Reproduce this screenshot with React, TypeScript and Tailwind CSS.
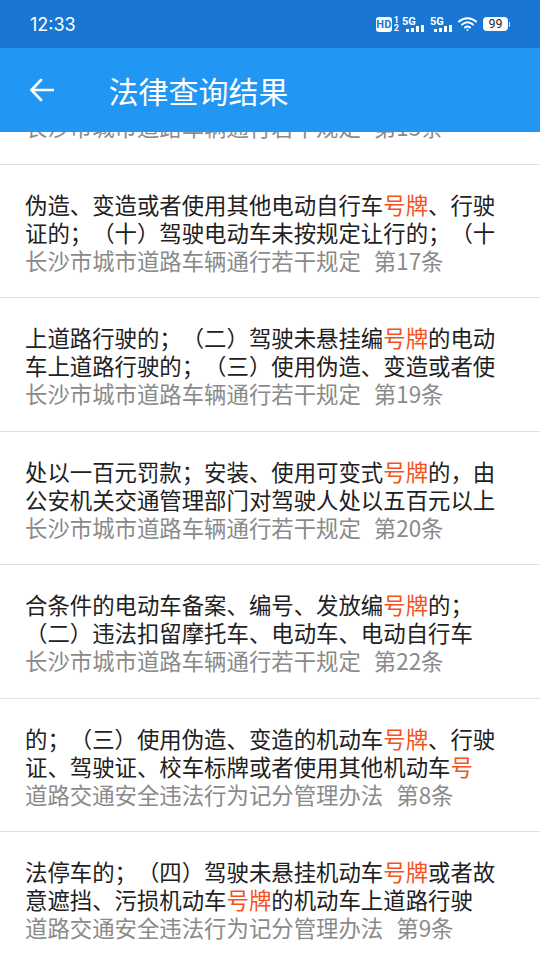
import React from "react";

const FONT = '"Noto Sans CJK SC", "Noto Sans", sans-serif';

function Hl({ text }: { text: string }) {
  const parts = text.split(/(号牌|号$)/);
  return (
    <>
      {parts.map((p, i) =>
        p === "号牌" || p === "号" ? (
          <span key={i} className="text-[#f4511e]">{p}</span>
        ) : (
          <span key={i}>{p}</span>
        )
      )}
    </>
  );
}

const rows = [
  { a: "", b: "", c: "长沙市城市道路车辆通行若干规定", d: "第15条" },
  { a: "伪造、变造或者使用其他电动自行车号牌、行驶", b: "证的；（十）驾驶电动车未按规定让行的；（十", c: "长沙市城市道路车辆通行若干规定", d: "第17条" },
  { a: "上道路行驶的；（二）驾驶未悬挂编号牌的电动", b: "车上道路行驶的；（三）使用伪造、变造或者使", c: "长沙市城市道路车辆通行若干规定", d: "第19条" },
  { a: "处以一百元罚款；安装、使用可变式号牌的，由", b: "公安机关交通管理部门对驾驶人处以五百元以上", c: "长沙市城市道路车辆通行若干规定", d: "第20条" },
  { a: "合条件的电动车备案、编号、发放编号牌的；", b: "（二）违法扣留摩托车、电动车、电动自行车", c: "长沙市城市道路车辆通行若干规定", d: "第22条" },
  { a: "的；（三）使用伪造、变造的机动车号牌、行驶", b: "证、驾驶证、校车标牌或者使用其他机动车号", c: "道路交通安全违法行为记分管理办法", d: "第8条" },
  { a: "法停车的；（四）驾驶未悬挂机动车号牌或者故", b: "意遮挡、污损机动车号牌的机动车上道路行驶", c: "道路交通安全违法行为记分管理办法", d: "第9条" },
];

function Signal({ label }: { label: string }) {
  return (
    <div className="flex flex-col items-start w-[23px] h-[15px]">
      <span className="text-[11px] leading-[9px] font-bold text-white" style={{ fontFamily: "Roboto, sans-serif" }}>{label}</span>
      <div className="flex items-end gap-[2px] -mt-[1px] ml-[4px] h-[7px]">
        <div className="w-[3px] h-[3px] bg-white" />
        <div className="w-[3px] h-[4px] bg-white" />
        <div className="w-[3px] h-[6px] bg-white" />
        <div className="w-[3px] h-[7px] bg-white" />
      </div>
    </div>
  );
}

export default function App() {
  return (
    <div className="w-[540px] h-[960px] overflow-hidden bg-white flex flex-col [text-spacing-trim:space-all]" style={{ fontFamily: FONT }}>
      <div className="h-[48px] bg-[#1976d2] flex items-center justify-between pl-[30px] pr-[30px] shrink-0">
        <span className="text-[18px] text-white" style={{ fontFamily: "Inter, sans-serif" }}>12:33</span>
        <div className="flex items-center">
          <div className="flex items-center gap-[2px] mr-[3px]">
            <span className="bg-white text-[#1976d2] rounded-[3px] text-[11px] leading-[15px] h-[15px] w-[16px] text-center font-bold" style={{ fontFamily: "Roboto, sans-serif" }}>HD</span>
            <div className="flex flex-col text-white text-[9px] leading-[8px] font-bold" style={{ fontFamily: "Roboto, sans-serif" }}>
              <span>1</span>
              <span>2</span>
            </div>
          </div>
          <Signal label="5G" />
          <div className="w-[5px]" />
          <Signal label="5G" />
          <svg className="ml-[5px]" width="20" height="16" viewBox="0 0 20 16" fill="none" stroke="white" strokeWidth="2" strokeLinecap="round">
            <path d="M1 5.5C6 1 13 1 18 5.5" />
            <path d="M4 8.6C7.5 5.6 11.5 5.6 15 8.6" />
            <path d="M7 11.5C8.6 10.2 10.4 10.2 12 11.5" />
            <circle cx="9.5" cy="14" r="1" fill="white" stroke="none" />
          </svg>
          <div className="flex items-center ml-[5px]">
            <div className="w-[25px] h-[14px] bg-white rounded-[4px] flex items-center justify-center text-[12.5px] text-[#1f2937]" style={{ fontFamily: "Roboto, sans-serif" }}>99</div>
            <div className="w-[1.5px] h-[5px] bg-white/80 ml-[0.5px]" />
          </div>
        </div>
      </div>
      <div className="h-[84px] bg-[#2196f3] flex items-center shrink-0 pl-[30px]">
        <svg width="24" height="24" viewBox="0 0 24 24" fill="none" stroke="white" strokeWidth="2.6" strokeLinecap="round" strokeLinejoin="round">
          <path d="M23 12H1.5" />
          <path d="M11 2L1.5 12l9.5 10" />
        </svg>
        <span className="ml-[54.5px] text-[30px] text-white">法律查询结果</span>
      </div>
      <div className="flex-1 overflow-hidden">
        <div className="-mt-[101px]">
          {rows.map((r, i) => (
            <div key={i} className="h-[133.5px] border-b-[1.5px] border-[#e0e0e0] pl-[25px] pt-[25px] text-[22.4px] leading-[28px] whitespace-nowrap">
              <div className="text-[#212121] h-[28px]"><Hl text={r.a} /></div>
              <div className="text-[#212121] h-[28px]"><Hl text={r.b} /></div>
              <div className="text-[#8a8a8a] h-[28px]">{r.c}<span className="ml-[13px]">{r.d}</span></div>
            </div>
          ))}
        </div>
      </div>
    </div>
  );
}
